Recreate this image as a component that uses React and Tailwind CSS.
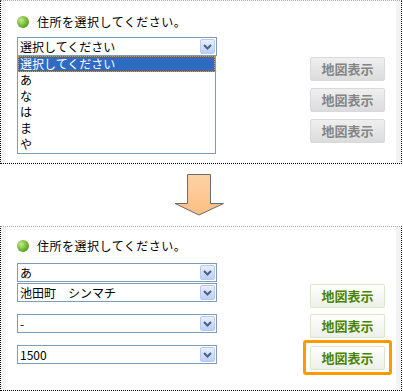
import React from "react";

const font = { fontFamily: '"Noto Sans CJK JP", "Noto Sans", sans-serif' };

function Bullet() {
  return (
    <span className="inline-block w-[12px] h-[12px] rounded-full bg-[radial-gradient(circle_at_35%_35%,#c6e79a_0%,#7cbf3a_45%,#3f7f14_100%)] mr-[8px]" />
  );
}

function Heading() {
  return (
    <div className="flex items-center h-[16px] text-[12px] leading-[16px] text-black tracking-[0.5px]">
      <Bullet />
      <span>住所を選択してください。</span>
    </div>
  );
}

function Chevron() {
  return (
    <svg width="9" height="6" viewBox="0 0 9 6">
      <path d="M1 1 L4.5 4.5 L8 1" fill="none" stroke="#4d6185" strokeWidth="2" />
    </svg>
  );
}

function Select({ value }) {
  return (
    <div className="flex items-center justify-between w-[200px] h-[19px] border border-[#7f9db9] bg-white">
      <span className="pl-[2px] text-[12px] leading-[16px] text-black whitespace-pre">{value}</span>
      <span className="flex items-center justify-center w-[15px] h-[15px] mr-[1px] rounded-[2px] border border-[#b9c9ef] bg-gradient-to-b from-[#e8effd] to-[#bccff8]">
        <Chevron />
      </span>
    </div>
  );
}

function GrayButton() {
  return (
    <div className="flex items-center justify-center w-[75px] h-[24px] rounded-[2px] border border-[#d6d9e0] bg-gradient-to-b from-[#efefef] to-[#dcdcdc] text-[13px] font-bold text-[#858585]">
      地図表示
    </div>
  );
}

function GreenButton() {
  return (
    <div className="flex items-center justify-center w-[75px] h-[24px] rounded-[2px] border border-[#d9e8c9] bg-gradient-to-b from-[#ffffff] to-[#eef0ea] text-[13px] font-bold text-[#4a8400]">
      地図表示
    </div>
  );
}

function Panel({ children, h }) {
  return (
    <div className={`w-[402px] ${h} border-t border-dotted border-t-[#a8a8a8] border-l border-r border-b border-l-black border-r-black border-b-black`}>
      <div className="h-full border-x-[5px] border-[#f3f3f3] bg-white pl-[11px]">
        {children}
      </div>
    </div>
  );
}

export default function App() {
  return (
    <div className="w-[403px] h-[391px] bg-white" style={font}>
      <Panel h="h-[164px]">
        <div className="pt-[13px]">
          <Heading />
          <div className="flex mt-[7px]">
            <div className="w-[200px]">
              <Select value="選択してください" />
              <div className="w-[199px] h-[98px] border border-t-0 border-[#7f9db9] bg-white text-[12px] leading-[16px] text-black">
                <div className="h-[16px] bg-[#316ac5] text-white pl-[2px] outline outline-1 outline-dotted outline-[#d8a040] -outline-offset-1">選択してください</div>
                <div className="h-[16px] pl-[2px]">あ</div>
                <div className="h-[16px] pl-[2px]">な</div>
                <div className="h-[16px] pl-[2px]">は</div>
                <div className="h-[16px] pl-[2px]">ま</div>
                <div className="h-[16px] pl-[2px]">や</div>
              </div>
            </div>
            <div className="ml-[93px] pt-[20px] flex flex-col gap-[7px]">
              <GrayButton />
              <GrayButton />
              <GrayButton />
            </div>
          </div>
        </div>
      </Panel>

      <div className="h-[62px] flex justify-center">
        <svg width="52" height="46" viewBox="0 0 52 46" className="mt-[9px] -ml-[4px]">
          <defs>
            <linearGradient id="ar" x1="0" y1="0" x2="0" y2="1">
              <stop offset="0" stopColor="#fdd2a6" />
              <stop offset="1" stopColor="#fbbe82" />
            </linearGradient>
          </defs>
          <polygon
            points="13.5,1.5 36.5,1.5 36.5,30.5 49.5,30.5 25,42 1,30.5 13.5,30.5"
            fill="url(#ar)"
            stroke="#6b6b6b"
            strokeWidth="1"
          />
        </svg>
      </div>

      <Panel h="h-[165px]">
        <div className="pt-[11px]">
          <Heading />
          <div className="mt-[9px]">
            <Select value="あ" />
          </div>
          <div className="flex mt-[1px]">
            <div className="w-[200px] flex flex-col">
              <div className="h-[31px]"><Select value="池田町　シンマチ" /></div>
              <div className="h-[31px]"><Select value="-" /></div>
              <div className="h-[31px]"><Select value="1500" /></div>
            </div>
            <div className="ml-[93px] flex flex-col">
              <div className="h-[31px] pt-[1px]"><GreenButton /></div>
              <div className="h-[31px]"><GreenButton /></div>
              <div className="h-[31px]">
                <div className="-ml-[7px] -mt-[5px] w-[89px] h-[35px] rounded-[3px] border-[3px] border-[#ff9900] flex items-center justify-center">
                  <GreenButton />
                </div>
              </div>
            </div>
          </div>
        </div>
      </Panel>
    </div>
  );
}
